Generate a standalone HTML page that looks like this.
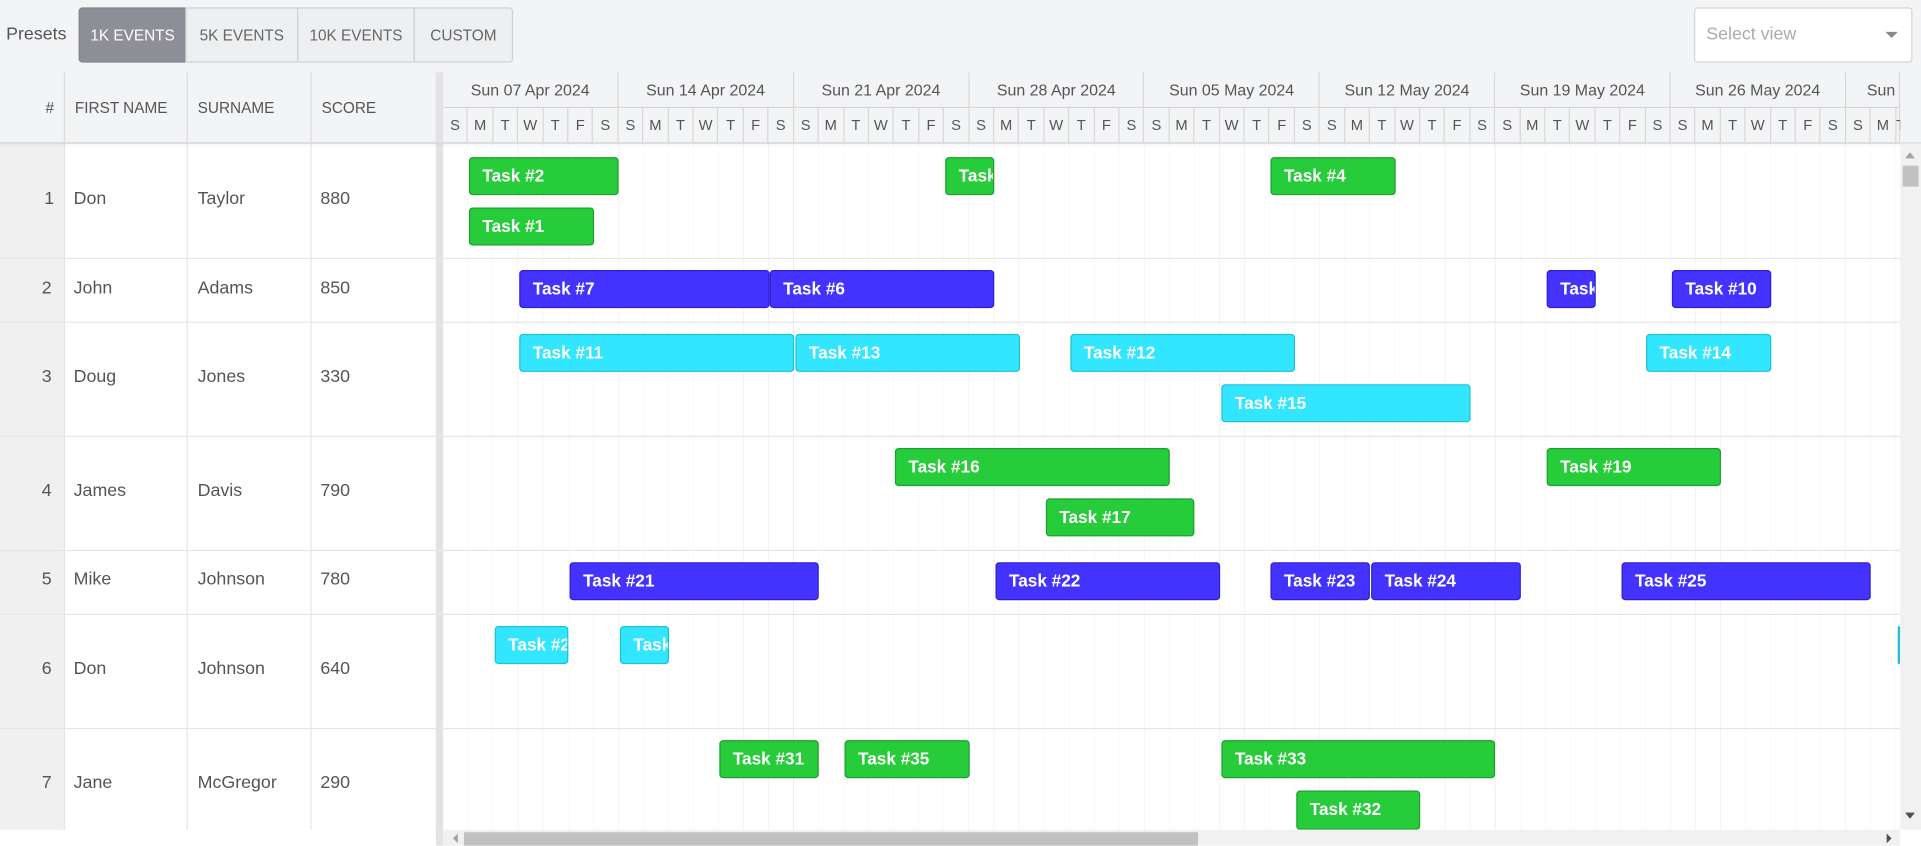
<!DOCTYPE html>
<html><head><meta charset="utf-8">
<style>
html,body{margin:0;padding:0;width:1921px;height:846px;overflow:hidden;background:#fff;}
#root{position:absolute;left:0;top:0;width:1565px;height:689px;transform:scale(1.2275);transform-origin:0 0;font-family:"Liberation Sans",sans-serif;color:#555;background:#fff;overflow:hidden;}
.a{position:absolute;}
.tb{left:0;top:0;width:1565px;height:59px;background:#f3f4f6;border-bottom:1px solid #dcdcdc;}
.btn{top:6px;height:45px;line-height:45px;text-align:center;font-size:12.5px;background:#eeeff1;border:1px solid #cfd0d3;box-sizing:border-box;color:#666;}
.hdr{top:59px;height:58px;background:#f3f4f6;border-bottom:1px solid #d8d8d8;box-sizing:border-box;}
.hc{top:59px;height:58px;line-height:58px;font-size:12.5px;color:#555;border-right:1px solid #dcdcdc;box-sizing:border-box;padding-left:8px;}
.row{left:0;width:1548px;border-bottom:1px solid #e6e6e6;box-sizing:border-box;}
.cell{font-size:14.5px;color:#555;}
.wk{top:0;height:29px;line-height:29px;width:142.86px;text-align:center;font-size:13px;border-right:1px solid #d8d8d8;border-bottom:1px solid #d8d8d8;box-sizing:border-box;white-space:nowrap;overflow:hidden;}
.dy{top:29px;height:29px;line-height:29px;width:20.41px;text-align:center;font-size:12px;border-right:1px solid #d8d8d8;box-sizing:border-box;}
.ev{height:31px;line-height:28px;border-radius:3px;box-sizing:border-box;color:#fff;font-size:14px;font-weight:bold;padding-left:10px;white-space:nowrap;overflow:hidden;}
.g{background:#26cc3a;border:1px solid #1e9e2e;}
.b{background:#4433ff;border:1px solid #2d1fcc;}
.c{background:#33e6ff;border:1px solid #1cc0d8;}
</style></head><body><div id="root">
<div class="a tb"></div>
<div class="a" style="left:5px;top:20px;font-size:14.5px;color:#555;">Presets</div>
<div class="a btn" style="left:64px;width:88px;background:#8e8e96;color:#fff;border-color:#85858c;border-radius:3px 0 0 3px;">1K EVENTS</div>
<div class="a btn" style="left:151px;width:92px;">5K EVENTS</div>
<div class="a btn" style="left:242px;width:96px;">10K EVENTS</div>
<div class="a btn" style="left:337px;width:81px;border-radius:0 3px 3px 0;">CUSTOM</div>
<div class="a" style="left:1380px;top:6px;width:178px;height:45px;background:#fff;border:1px solid #d4d4d4;border-radius:3px;box-sizing:border-box;"></div>
<div class="a" style="left:1390px;top:20px;font-size:14.5px;color:#aaa;">Select view</div>
<div class="a" style="left:1536px;top:26px;width:0;height:0;border-left:5px solid transparent;border-right:5px solid transparent;border-top:5px solid #888;"></div>

<div class="a hdr" style="left:0;width:1565px;"></div>
<div class="a hc" style="left:0;width:53px;text-align:right;padding-right:8px;">#</div>
<div class="a hc" style="left:53px;width:100px;">FIRST NAME</div>
<div class="a hc" style="left:153px;width:101px;">SURNAME</div>
<div class="a hc" style="left:254px;width:101px;border-right:none;">SCORE</div>

<div class="a" style="left:0;top:117px;width:53px;height:559px;background:#f0f0f0;"></div>
<div class="a" style="left:52px;top:117px;width:1px;height:559px;background:#e3e3e3;"></div>
<div class="a" style="left:152px;top:117px;width:1px;height:559px;background:#e6e6e6;"></div>
<div class="a" style="left:253px;top:117px;width:1px;height:559px;background:#e6e6e6;"></div>
<div class="a" style="left:361px;top:117px;width:1187px;height:559px;background-image:repeating-linear-gradient(90deg,transparent 0,transparent 142.36px,#ececec 142.36px,#ececec 142.86px),repeating-linear-gradient(90deg,transparent 0,transparent 19.91px,#f4f4f4 19.91px,#f4f4f4 20.41px);"></div>
<div class="a" style="left:355px;top:59px;width:6px;height:630px;background:#e3e3e5;"></div>

<div class="a row" style="top:117px;height:94px;"></div>
<div class="a row" style="top:210px;height:53px;"></div>
<div class="a row" style="top:262px;height:94px;"></div>
<div class="a row" style="top:355px;height:94px;"></div>
<div class="a row" style="top:448px;height:53px;"></div>
<div class="a row" style="top:500px;height:94px;"></div>

<div class="a cell" style="left:36px;top:154px;">1</div><div class="a cell" style="left:60px;top:154px;">Don</div><div class="a cell" style="left:161px;top:154px;">Taylor</div><div class="a cell" style="left:261px;top:154px;">880</div>
<div class="a cell" style="left:34px;top:227px;">2</div><div class="a cell" style="left:60px;top:227px;">John</div><div class="a cell" style="left:161px;top:227px;">Adams</div><div class="a cell" style="left:261px;top:227px;">850</div>
<div class="a cell" style="left:34px;top:299px;">3</div><div class="a cell" style="left:60px;top:299px;">Doug</div><div class="a cell" style="left:161px;top:299px;">Jones</div><div class="a cell" style="left:261px;top:299px;">330</div>
<div class="a cell" style="left:34px;top:392px;">4</div><div class="a cell" style="left:60px;top:392px;">James</div><div class="a cell" style="left:161px;top:392px;">Davis</div><div class="a cell" style="left:261px;top:392px;">790</div>
<div class="a cell" style="left:34px;top:464px;">5</div><div class="a cell" style="left:60px;top:464px;">Mike</div><div class="a cell" style="left:161px;top:464px;">Johnson</div><div class="a cell" style="left:261px;top:464px;">780</div>
<div class="a cell" style="left:34px;top:537px;">6</div><div class="a cell" style="left:60px;top:537px;">Don</div><div class="a cell" style="left:161px;top:537px;">Johnson</div><div class="a cell" style="left:261px;top:537px;">640</div>
<div class="a cell" style="left:34px;top:630px;">7</div><div class="a cell" style="left:60px;top:630px;">Jane</div><div class="a cell" style="left:161px;top:630px;">McGregor</div><div class="a cell" style="left:261px;top:630px;">290</div>

<div class="a" style="left:361px;top:59px;width:1187px;height:58px;overflow:hidden;">
<div class="a wk" style="left:0px;">Sun 07 Apr 2024</div>
<div class="a wk" style="left:142.86px;">Sun 14 Apr 2024</div>
<div class="a wk" style="left:285.72px;">Sun 21 Apr 2024</div>
<div class="a wk" style="left:428.58px;">Sun 28 Apr 2024</div>
<div class="a wk" style="left:571.44px;">Sun 05 May 2024</div>
<div class="a wk" style="left:714.3px;">Sun 12 May 2024</div>
<div class="a wk" style="left:857.16px;">Sun 19 May 2024</div>
<div class="a wk" style="left:1000.02px;">Sun 26 May 2024</div>
<div class="a wk" style="left:1142.88px;width:44px;text-align:left;padding-left:17px;">Sun 02 Jun 2024</div>
<div id="days"></div>
</div>
<script>
(function(){var L="SMTWTFS",h="";for(var i=0;i<59;i++){var w=(i==58)?(1187-i*20.408):20.41;h+='<div class="a dy" style="left:'+(i*20.408)+'px;width:'+w+'px;">'+L[i%7]+'</div>';}document.getElementById("days").innerHTML=h;})();
</script>
<div class="a" style="left:0;top:116px;width:1548px;height:4px;background:linear-gradient(rgba(0,0,0,0.05),transparent);"></div>

<div class="a" style="left:361px;top:117px;width:1187px;height:559px;overflow:hidden;">
<div style="position:absolute;left:-361px;top:-117px;width:1548px;height:676px;">
<div class="a ev g" style="left:382px;top:128px;width:122px;">Task #2</div>
<div class="a ev g" style="left:770px;top:128px;width:40px;">Task</div>
<div class="a ev g" style="left:1035px;top:128px;width:102px;">Task #4</div>
<div class="a ev g" style="left:382px;top:169px;width:102px;">Task #1</div>

<div class="a ev b" style="left:423px;top:220px;width:204px;">Task #7</div>
<div class="a ev b" style="left:627px;top:220px;width:183px;">Task #6</div>
<div class="a ev b" style="left:1260px;top:220px;width:40px;">Task</div>
<div class="a ev b" style="left:1362px;top:220px;width:81px;">Task #10</div>

<div class="a ev c" style="left:423px;top:272px;width:224px;">Task #11</div>
<div class="a ev c" style="left:648px;top:272px;width:183px;">Task #13</div>
<div class="a ev c" style="left:872px;top:272px;width:183px;">Task #12</div>
<div class="a ev c" style="left:1341px;top:272px;width:102px;">Task #14</div>
<div class="a ev c" style="left:995px;top:313px;width:203px;">Task #15</div>

<div class="a ev g" style="left:729px;top:365px;width:224px;">Task #16</div>
<div class="a ev g" style="left:1260px;top:365px;width:142px;">Task #19</div>
<div class="a ev g" style="left:852px;top:406px;width:121px;">Task #17</div>

<div class="a ev b" style="left:464px;top:458px;width:203px;">Task #21</div>
<div class="a ev b" style="left:811px;top:458px;width:183px;">Task #22</div>
<div class="a ev b" style="left:1035px;top:458px;width:81px;">Task #23</div>
<div class="a ev b" style="left:1117px;top:458px;width:122px;">Task #24</div>
<div class="a ev b" style="left:1321px;top:458px;width:203px;">Task #25</div>

<div class="a ev c" style="left:403px;top:510px;width:60px;">Task #26</div>
<div class="a ev c" style="left:505px;top:510px;width:40px;">Task</div>
<div class="a ev c" style="left:1546px;top:510px;width:2px;padding:0;"></div>

<div class="a ev g" style="left:586px;top:603px;width:81px;">Task #31</div>
<div class="a ev g" style="left:688px;top:603px;width:102px;">Task #35</div>
<div class="a ev g" style="left:995px;top:603px;width:223px;">Task #33</div>
<div class="a ev g" style="left:1056px;top:644px;width:101px;height:32px;">Task #32</div>
</div></div>

<div class="a" style="left:1548px;top:117px;width:17px;height:559px;background:#f1f1f1;"></div>
<div class="a" style="left:1552px;top:124px;width:0;height:0;border-left:4px solid transparent;border-right:4px solid transparent;border-bottom:5px solid #a3a3a3;"></div>
<div class="a" style="left:1550px;top:135px;width:13px;height:17px;background:#c1c1c1;"></div>
<div class="a" style="left:1552px;top:662px;width:0;height:0;border-left:4px solid transparent;border-right:4px solid transparent;border-top:5px solid #505050;"></div>
<div class="a" style="left:0;top:676px;width:355px;height:13px;background:#fff;"></div>
<div class="a" style="left:361px;top:676px;width:1187px;height:13px;background:#f1f1f1;"></div>
<div class="a" style="left:369px;top:679px;width:0;height:0;border-top:4px solid transparent;border-bottom:4px solid transparent;border-right:4px solid #a3a3a3;"></div>
<div class="a" style="left:378px;top:678px;width:598px;height:11px;background:#c1c1c1;"></div>
<div class="a" style="left:1537px;top:679px;width:0;height:0;border-top:4px solid transparent;border-bottom:4px solid transparent;border-left:4px solid #505050;"></div>
<div class="a" style="left:1548px;top:676px;width:17px;height:13px;background:#fff;"></div>
</div></body></html>
